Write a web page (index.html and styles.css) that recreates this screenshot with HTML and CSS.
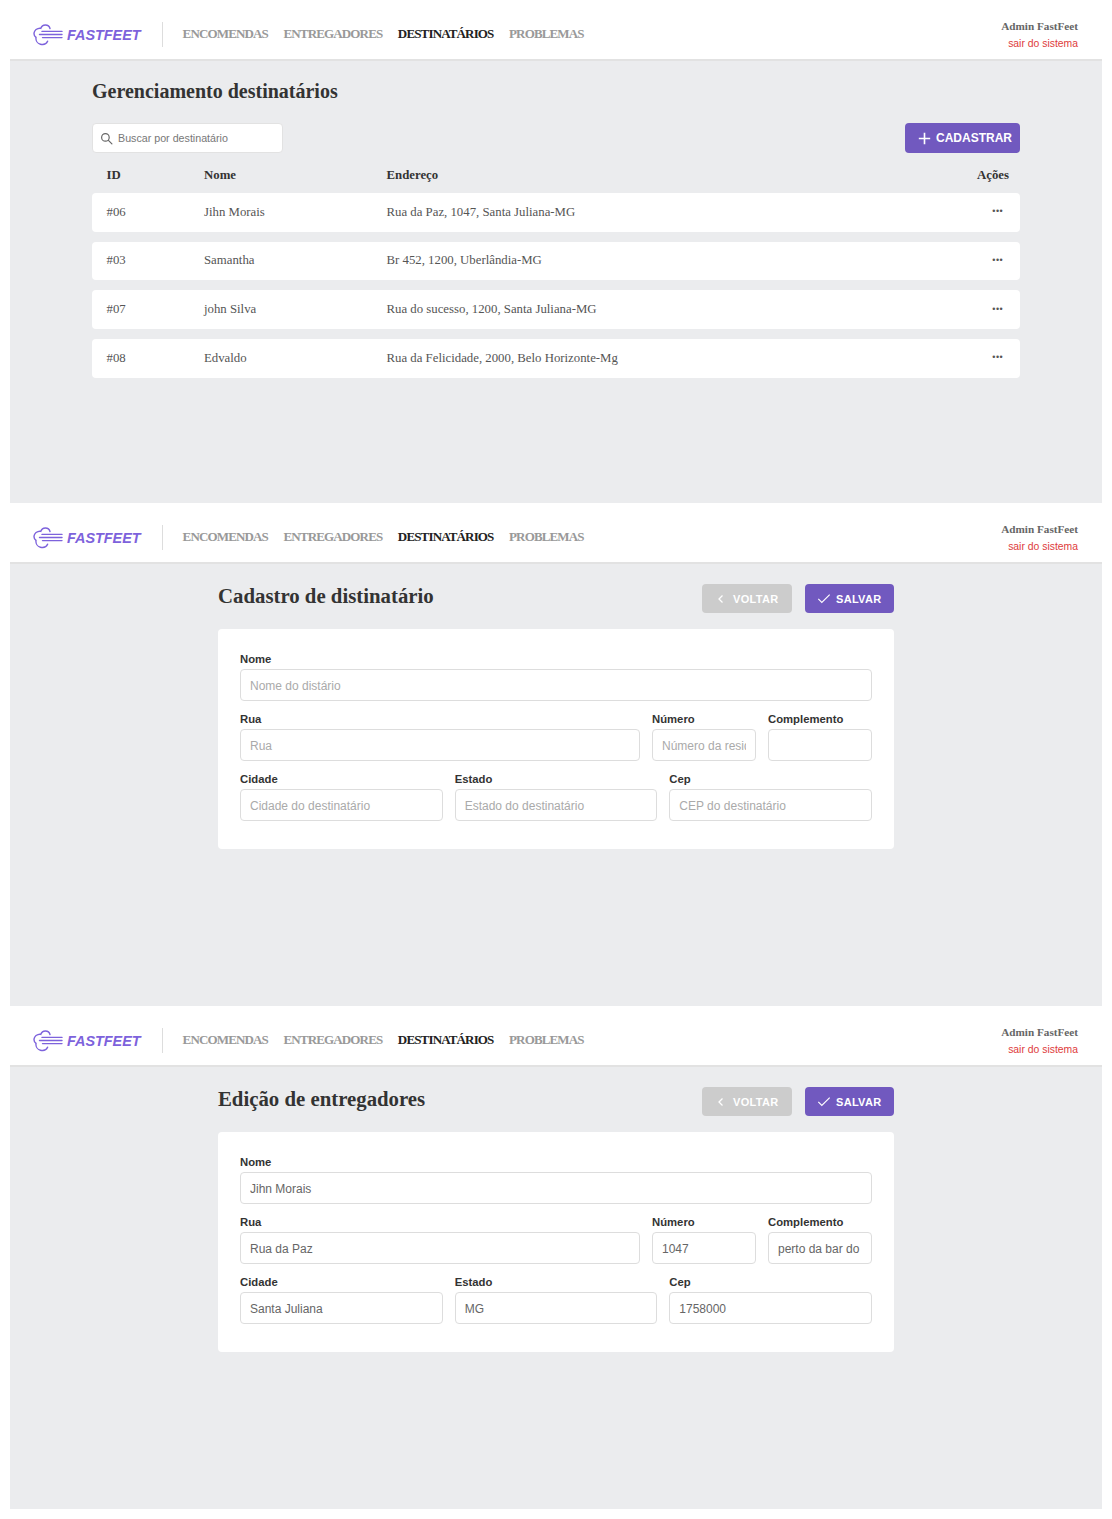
FILE: index.html
```html
<!DOCTYPE html>
<html lang="en">
<head>
<meta charset="UTF-8">
<meta name="viewport" content="width=device-width, initial-scale=1.0">
<title>FastFeet</title>
<link rel="stylesheet" href="styles.css">
</head>
<body>

<!-- listagem -->
<section class="screen">
    <header class="topbar">
        <div class="brand">
            <svg class="brand-icon" viewBox="0 0 30 22" fill="none" stroke="#7d62dc" stroke-width="1.4" stroke-linecap="round"><path d="M17 4.5C16.5 2.4 14.6 1 12.4 1 10.2 1 8.4 2.4 7.8 4.4 6.8 4 3.2 4.4 1.8 7 .6 9.2 1 11.800 3 13.400 2.600 16.400 4.400 19.400 7.400 20.200 10.400 21 13.400 19.800 14.600 17.200"/><path d="M9 7.400H29M6.500 10.500H29M9.500 13.600H29"/></svg>
            <span class="brand-name">FASTFEET</span>
        </div>
        <nav class="nav">
            <a href="#">ENCOMENDAS</a>
            <a href="#">ENTREGADORES</a>
            <a href="#" class="active">DESTINATÁRIOS</a>
            <a href="#">PROBLEMAS</a>
        </nav>
        <div class="user">
            <strong>Admin FastFeet</strong>
            <a href="#">sair do sistema</a>
        </div>
    </header>
    <main class="list-page">
        <h1>Gerenciamento destinatários</h1>
        <div class="toolbar">
            <label class="search">
                <svg viewBox="0 0 24 24" fill="none" stroke="#666" stroke-width="2.200" stroke-linecap="round"><circle cx="10" cy="10" r="7"/><path d="M15.500 15.500 22 22"/></svg>
                <input type="text" placeholder="Buscar por destinatário">
            </label>
            <button class="btn btn-add" type="button">
                <svg viewBox="0 0 16 16" fill="none" stroke="#fff" stroke-width="2"><path d="M8 1v14M1 8h14"/></svg>
                CADASTRAR
            </button>
        </div>
        <div class="table-head row-grid">
            <span>ID</span>
            <span>Nome</span>
            <span>Endereço</span>
            <span class="actions">Ações</span>
        </div>
        <div class="table-row row-grid">
            <span>#06</span>
            <span>Jihn Morais</span>
            <span>Rua da Paz, 1047, Santa Juliana-MG</span>
            <span class="actions dots">•••</span>
        </div>
        <div class="table-row row-grid">
            <span>#03</span>
            <span>Samantha</span>
            <span>Br 452, 1200, Uberlândia-MG</span>
            <span class="actions dots">•••</span>
        </div>
        <div class="table-row row-grid">
            <span>#07</span>
            <span>john Silva</span>
            <span>Rua do sucesso, 1200, Santa Juliana-MG</span>
            <span class="actions dots">•••</span>
        </div>
        <div class="table-row row-grid">
            <span>#08</span>
            <span>Edvaldo</span>
            <span>Rua da Felicidade, 2000, Belo Horizonte-Mg</span>
            <span class="actions dots">•••</span>
        </div>
    </main>
</section>

<!-- cadastro -->
<section class="screen">
    <header class="topbar">
        <div class="brand">
            <svg class="brand-icon" viewBox="0 0 30 22" fill="none" stroke="#7d62dc" stroke-width="1.4" stroke-linecap="round"><path d="M17 4.5C16.5 2.4 14.6 1 12.4 1 10.2 1 8.4 2.4 7.8 4.4 6.8 4 3.2 4.4 1.8 7 .6 9.2 1 11.800 3 13.400 2.600 16.400 4.400 19.400 7.400 20.200 10.400 21 13.400 19.800 14.600 17.200"/><path d="M9 7.400H29M6.500 10.500H29M9.500 13.600H29"/></svg>
            <span class="brand-name">FASTFEET</span>
        </div>
        <nav class="nav">
            <a href="#">ENCOMENDAS</a>
            <a href="#">ENTREGADORES</a>
            <a href="#" class="active">DESTINATÁRIOS</a>
            <a href="#">PROBLEMAS</a>
        </nav>
        <div class="user">
            <strong>Admin FastFeet</strong>
            <a href="#">sair do sistema</a>
        </div>
    </header>
    <main class="form-page">
        <div class="form-head">
            <h1>Cadastro de distinatário</h1>
            <button class="btn btn-back" type="button">
                <svg viewBox="0 0 12 12" fill="none" stroke="#fff" stroke-width="1.300"><path d="M7.500 2.500 4 6l3.500 3.500"/></svg>
                VOLTAR
            </button>
            <button class="btn btn-save" type="button">
                <svg viewBox="0 0 16 12" fill="none" stroke="#fff" stroke-width="1.300"><path d="M1.500 6.500 5.500 10.500 14.500 1.500"/></svg>
                SALVAR
            </button>
        </div>
        <form class="card">
            <div class="field">
                <label>Nome</label>
                <input type="text" placeholder="Nome do distário">
            </div>
            <div class="form-row address">
                <div class="field"><label>Rua</label><input type="text" placeholder="Rua"></div>
                <div class="field"><label>Número</label><input type="text" placeholder="Número da residência"></div>
                <div class="field"><label>Complemento</label><input type="text"></div>
            </div>
            <div class="form-row city">
                <div class="field"><label>Cidade</label><input type="text" placeholder="Cidade do destinatário"></div>
                <div class="field"><label>Estado</label><input type="text" placeholder="Estado do destinatário"></div>
                <div class="field"><label>Cep</label><input type="text" placeholder="CEP do destinatário"></div>
            </div>
        </form>
    </main>
</section>

<!-- edição -->
<section class="screen">
    <header class="topbar">
        <div class="brand">
            <svg class="brand-icon" viewBox="0 0 30 22" fill="none" stroke="#7d62dc" stroke-width="1.4" stroke-linecap="round"><path d="M17 4.5C16.5 2.4 14.6 1 12.4 1 10.2 1 8.4 2.4 7.8 4.4 6.8 4 3.2 4.4 1.8 7 .6 9.2 1 11.800 3 13.400 2.600 16.400 4.400 19.400 7.400 20.200 10.400 21 13.400 19.800 14.600 17.200"/><path d="M9 7.400H29M6.500 10.500H29M9.500 13.600H29"/></svg>
            <span class="brand-name">FASTFEET</span>
        </div>
        <nav class="nav">
            <a href="#">ENCOMENDAS</a>
            <a href="#">ENTREGADORES</a>
            <a href="#" class="active">DESTINATÁRIOS</a>
            <a href="#">PROBLEMAS</a>
        </nav>
        <div class="user">
            <strong>Admin FastFeet</strong>
            <a href="#">sair do sistema</a>
        </div>
    </header>
    <main class="form-page">
        <div class="form-head">
            <h1>Edição de entregadores</h1>
            <button class="btn btn-back" type="button">
                <svg viewBox="0 0 12 12" fill="none" stroke="#fff" stroke-width="1.300"><path d="M7.500 2.500 4 6l3.500 3.500"/></svg>
                VOLTAR
            </button>
            <button class="btn btn-save" type="button">
                <svg viewBox="0 0 16 12" fill="none" stroke="#fff" stroke-width="1.300"><path d="M1.500 6.500 5.500 10.500 14.500 1.500"/></svg>
                SALVAR
            </button>
        </div>
        <form class="card">
            <div class="field">
                <label>Nome</label>
                <input type="text" value="Jihn Morais">
            </div>
            <div class="form-row address">
                <div class="field"><label>Rua</label><input type="text" value="Rua da Paz"></div>
                <div class="field"><label>Número</label><input type="text" value="1047"></div>
                <div class="field"><label>Complemento</label><input type="text" value="perto da bar do"></div>
            </div>
            <div class="form-row city">
                <div class="field"><label>Cidade</label><input type="text" value="Santa Juliana"></div>
                <div class="field"><label>Estado</label><input type="text" value="MG"></div>
                <div class="field"><label>Cep</label><input type="text" value="1758000"></div>
            </div>
        </form>
    </main>
</section>

</body>
</html>
```

FILE: styles.css
```css
* {
    box-sizing: border-box;
}
body {
    margin: 0;
    padding: 0 10px 10px;
    background: #fff;
    font-family: "Liberation Sans", Arial, sans-serif;
}
.screen {
    height: 503px;
    background: #ebecee;
}

/* header */
.topbar {
    display: flex;
    align-items: center;
    height: 61px;
    padding: 10px 24px 0 23px;
    background: #fff;
    border-bottom: 2px solid #e2e2e2;
}
.brand {
    display: flex;
    align-items: center;
    gap: 4px;
    height: 25px;
    padding-right: 21px;
    border-right: 1px solid #ddd;
}
.brand-icon {
    width: 30px;
    height: 22px;
}
.brand-name {
    font-size: 14.400px;
    font-weight: bold;
    font-style: italic;
    color: #7d62dc;
}
.nav {
    display: flex;
    gap: 15.500px;
    margin-left: 20px;
    padding-bottom: 1px;
}
.nav a {
    font-family: "Liberation Serif", serif;
    font-size: 13px;
    font-weight: bold;
    letter-spacing: -0.850px;
    color: #999;
    text-decoration: none;
}
.nav a.active {
    color: #222;
}
.user {
    display: flex;
    flex-direction: column;
    align-items: flex-end;
    gap: 6px;
    margin-left: auto;
}
.user strong {
    font-family: "Liberation Serif", serif;
    font-size: 11.200px;
    color: #666;
}
.user a {
    font-size: 10.400px;
    color: #de3b3b;
    text-decoration: none;
}

/* listagem */
.list-page {
    width: 928px;
    margin-left: 82px;
    padding-top: 18px;
}
h1 {
    margin: 0;
    font-family: "Liberation Serif", serif;
    font-weight: bold;
    color: #333;
}
.list-page h1 {
    font-size: 20px;
    line-height: 24px;
}
.toolbar {
    display: flex;
    justify-content: space-between;
    margin-top: 20px;
}
.search {
    display: flex;
    align-items: center;
    gap: 5px;
    width: 191px;
    height: 30px;
    padding-left: 7px;
    background: #fff;
    border: 1px solid #e2e2e2;
    border-radius: 4px;
}
.search svg {
    width: 13px;
    height: 13px;
}
.search input {
    width: 150px;
    border: 0;
    outline: 0;
    padding: 0;
    font-family: inherit;
    font-size: 10.700px;
}
.search input::placeholder {
    color: #777;
}
.btn {
    display: flex;
    align-items: center;
    border: 0;
    border-radius: 4px;
    color: #fff;
    font-family: inherit;
    font-weight: bold;
}
.btn-add {
    gap: 5px;
    width: 115px;
    height: 30px;
    padding: 0 0 0 13px;
    background: #7159bf;
    font-size: 12px;
}
.btn-add svg {
    width: 13px;
    height: 13px;
}
.row-grid {
    display: grid;
    grid-template-columns: 97.500px 182.500px 1fr 60px;
    align-items: center;
    padding: 0 11px 0 14.500px;
    font-family: "Liberation Serif", serif;
    font-size: 12.800px;
}
.table-head {
    height: 40px;
    padding-top: 4px;
    font-weight: bold;
    color: #333;
}
.table-row {
    height: 38.670px;
    margin-bottom: 10px;
    background: #fff;
    border-radius: 4px;
    color: #555;
}
.actions {
    text-align: right;
}
.dots {
    padding-bottom: 2px;
    padding-right: 6px;
    font-family: "Liberation Sans", sans-serif;
    font-size: 9px;
    letter-spacing: 0.400px;
    color: #555;
}

/* formulários */
.form-page {
    width: 676px;
    margin-left: 208px;
    padding-top: 20px;
}
.form-head {
    display: flex;
    align-items: flex-start;
    height: 29px;
}
.form-head h1 {
    font-size: 20.800px;
    line-height: 24px;
    margin-right: auto;
}
.btn-back,
.btn-save {
    height: 29px;
    padding-bottom: 1px;
    font-size: 11px;
    letter-spacing: 0.300px;
}
.btn-back {
    gap: 6px;
    width: 90px;
    margin-right: 13px;
    padding-left: 13px;
    padding-right: 0;
    background: #ccc;
}
.btn-back svg {
    width: 12px;
    height: 12px;
}
.btn-save {
    gap: 5px;
    width: 89px;
    padding-left: 12px;
    padding-right: 0;
    background: #7159bf;
}
.btn-save svg {
    width: 14px;
    height: 11px;
}
.card {
    height: 220px;
    margin-top: 16px;
    padding: 22px;
    background: #fff;
    border-radius: 4px;
}
.form-row {
    display: grid;
    gap: 12px;
}
.address {
    grid-template-columns: 400px 104px 104px;
}
.city {
    grid-template-columns: repeat(3, 1fr);
}
.field {
    margin-bottom: 10px;
}
.field label {
    display: block;
    height: 18px;
    line-height: 16px;
    font-size: 11.300px;
    font-weight: bold;
    color: #333;
}
.field input {
    display: block;
    width: 100%;
    height: 32px;
    padding: 1px 9px 0;
    border: 1px solid #ddd;
    border-radius: 4px;
    outline: 0;
    font-family: inherit;
    font-size: 12px;
    color: #666;
}
.field input::placeholder {
    color: #aaa;
}
```
